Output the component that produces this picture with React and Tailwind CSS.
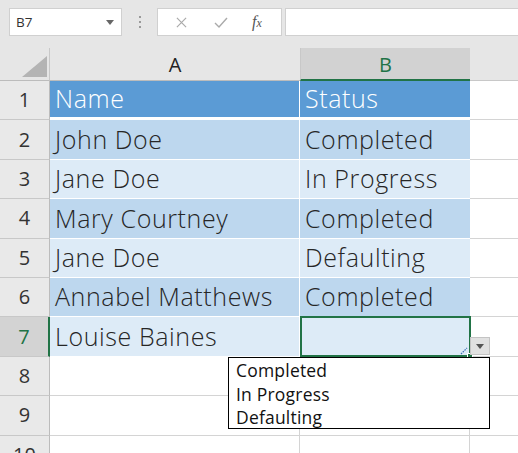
import React from "react";

const rows = [
  { n: "1", a: "Name", b: "Status", head: true },
  { n: "2", a: "John Doe", b: "Completed", dark: true },
  { n: "3", a: "Jane Doe", b: "In Progress" },
  { n: "4", a: "Mary Courtney", b: "Completed", dark: true },
  { n: "5", a: "Jane Doe", b: "Defaulting" },
  { n: "6", a: "Annabel Matthews", b: "Completed", dark: true },
  { n: "7", a: "Louise Baines", b: "", sel: true },
];

function DataRow({ r }) {
  const bg = r.head ? "bg-[#5b9bd5]" : r.dark ? "bg-[#bdd7ee]" : "bg-[#ddebf7]";
  const txt = r.head ? "text-white" : "text-[#262626]";
  return (
    <div className="flex h-[39.4px]">
      <div
        className={
          "w-[50px] shrink-0 flex items-center justify-center text-[20px] border-b border-[#c8c8c8] " +
          (r.sel
            ? "bg-[#d3d3d3] text-[#217346] border-r-2 border-r-[#217346]"
            : "bg-[#e9e9e9] text-[#333] border-r border-r-[#bcbcbc]")
        }
      >
        {r.n}
      </div>
      <div
        className={
          "w-[250px] shrink-0 flex items-center pl-[5px] text-[25px] font-[350] tracking-[0.6px] whitespace-nowrap border-r border-r-white " +
          (r.head ? "border-b-[3px] border-b-white " : "border-b border-b-white ") +
          bg + " " + txt
        }
      >
        {r.a}
      </div>
      <div
        className={
          "w-[170px] shrink-0 flex items-center pl-[5px] text-[25px] font-[350] tracking-[0.6px] whitespace-nowrap relative " +
          (r.head ? "border-b-[3px] border-b-white " : "border-b border-b-white ") +
          bg + " " + txt
        }
      >
        {r.b}
        {r.sel && (
          <>
            <div className="absolute left-0 top-[-1px] right-[-1px] bottom-[-1px] border-2 border-[#217346]" />
            <div className="absolute right-[-3px] bottom-[-3px] w-[6px] h-[6px] bg-[#217346] border border-white" />
            <svg className="absolute right-[2px] bottom-[1px]" width="8" height="8" viewBox="0 0 8 8">
              <path d="M1 7 L7 1" stroke="#3b6fb6" strokeWidth="1.2" strokeDasharray="1.5 1" />
            </svg>
          </>
        )}
      </div>
      <div className="flex-1 border-b border-[#d4d4d4] bg-white" />
    </div>
  );
}

function EmptyRow({ n }) {
  return (
    <div className="flex h-[39.4px]">
      <div className="w-[50px] shrink-0 flex items-center justify-center text-[20px] text-[#333] bg-[#e9e9e9] border-b border-[#c8c8c8] border-r border-r-[#bcbcbc]">
        {n}
      </div>
      <div className="w-[250px] shrink-0 border-b border-r border-[#d4d4d4]" />
      <div className="w-[170px] shrink-0 border-b border-r border-[#d4d4d4]" />
      <div className="flex-1 border-b border-[#d4d4d4]" />
    </div>
  );
}

export default function App() {
  return (
    <div
      className="w-[518px] h-[453px] overflow-hidden bg-white relative"
      style={{ fontFamily: '"Open Sans", "Noto Sans", sans-serif' }}
    >
      {/* toolbar */}
      <div className="h-[48px] bg-[#e6e6e6] flex items-start pt-[8px]">
        <div className="ml-[9px] w-[113px] h-[28px] bg-white border border-[#d0d0d0] flex items-center justify-between pl-[6px] pr-[7px]">
          <span className="text-[13.5px] text-[#333]">B7</span>
          <svg width="8" height="5" viewBox="0 0 8 5">
            <path d="M0 0 H8 L4 5 Z" fill="#666" />
          </svg>
        </div>
        <div className="w-[35px] h-[28px] flex flex-col items-center justify-center gap-[3px]">
          <span className="w-[2px] h-[2px] bg-[#999]" />
          <span className="w-[2px] h-[2px] bg-[#999]" />
          <span className="w-[2px] h-[2px] bg-[#999]" />
        </div>
        <div className="w-[125px] h-[28px] bg-white border border-[#d0d0d0] flex items-center">
          <svg className="ml-[18px]" width="11" height="11" viewBox="0 0 12 12">
            <path d="M1 1 L11 11 M11 1 L1 11" stroke="#aaa" strokeWidth="1.3" />
          </svg>
          <svg className="ml-[27px]" width="14" height="11" viewBox="0 0 14 11">
            <path d="M1 6 L5 10 L13 1" stroke="#aaa" strokeWidth="1.4" fill="none" />
          </svg>
          <span
            className="ml-[24px] text-[16px] italic text-[#555]"
            style={{ fontFamily: '"Liberation Serif", serif' }}
          >
            f<span className="text-[12px]">x</span>
          </span>
        </div>
        <div className="ml-[3px] flex-1 h-[28px] bg-white border border-[#d0d0d0] border-r-0" />
      </div>

      {/* column headers */}
      <div className="h-[33px] flex bg-[#e6e6e6]">
        <div className="w-[50px] shrink-0 border-r border-[#c8c8c8] border-b border-b-[#bcbcbc] relative">
          <svg className="absolute left-[22px] top-[8px]" width="25" height="21" viewBox="0 0 25 21">
            <path d="M25 0 V21 H0 Z" fill="#b4b4b4" />
          </svg>
        </div>
        <div className="w-[250px] shrink-0 flex items-center justify-center text-[20px] text-[#222] border-b border-[#bcbcbc] pt-[2px]">
          A
        </div>
        <div className="w-[170px] shrink-0 flex items-center justify-center text-[20px] text-[#217346] bg-[#d2d2d2] border-b-2 border-[#217346] border-l border-l-[#c8c8c8] pt-[2px]">
          B
        </div>
        <div className="flex-1 border-b border-[#c8c8c8]" />
      </div>

      {/* rows */}
      {rows.map((r) => (
        <DataRow key={r.n} r={r} />
      ))}
      <EmptyRow n="8" />
      <EmptyRow n="9" />
      <EmptyRow n="10" />

      {/* dropdown button */}
      <div className="absolute left-[470px] top-[337px] w-[20px] h-[18px] bg-[#e1e1e1] border border-[#c4c4c4] flex items-center justify-center">
        <svg width="8" height="5" viewBox="0 0 8 5">
          <path d="M0 0 H8 L4 5 Z" fill="#555" />
        </svg>
      </div>

      {/* dropdown list */}
      <div className="absolute left-[228px] top-[357px] w-[262px] h-[72px] bg-white border border-black pl-[7px] pt-[1px] text-[17.5px] tracking-[0.2px] leading-[23.5px] text-[#111]">
        <div>Completed</div>
        <div>In Progress</div>
        <div>Defaulting</div>
      </div>
    </div>
  );
}
